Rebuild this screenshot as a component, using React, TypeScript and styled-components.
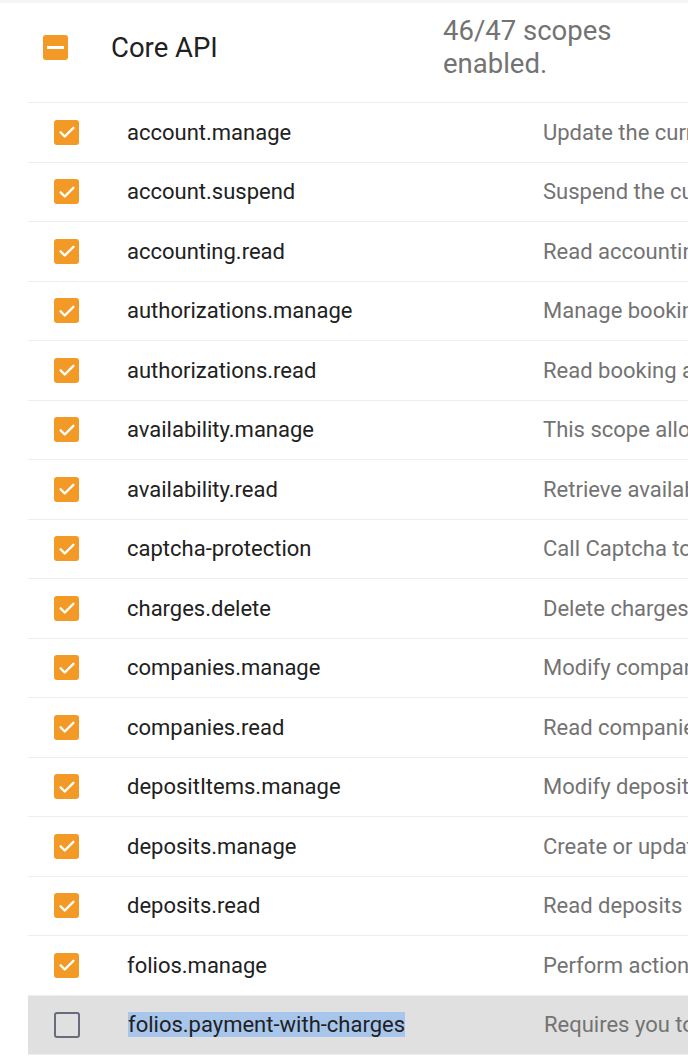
import React from "react";
import styled, { createGlobalStyle } from "styled-components";

const Global = createGlobalStyle`
  html, body { margin: 0; padding: 0; background: #ffffff; overflow: hidden; }
  body { font-family: Roboto, "Noto Sans", "Liberation Sans", sans-serif; color: #212121; }
  ::selection { background: #a8c6ec; }
`;

const Page = styled.div`
  width: 688px;
  height: 1061px;
  overflow: hidden;
  border-top: 3px solid #f5f5f5;
  box-sizing: border-box;
`;

const Header = styled.div`
  display: flex;
  align-items: center;
  height: 99px;
  box-sizing: border-box;
  padding: 0 0 11px 43px;
`;

const HeaderTitle = styled.div`
  width: 332px;
  margin-left: 43px;
  flex-shrink: 0;
  font-size: 27.5px;
  color: #212121;
`;

const HeaderCount = styled.div`
  width: 230px;
  font-size: 27.5px;
  line-height: 33px;
  color: #737373;
  flex-shrink: 0;
`;

const Table = styled.div`
  margin-left: 28px;
  width: 1100px;
`;

const Row = styled.div<{ $selected?: boolean }>`
  display: flex;
  align-items: center;
  height: 59.5px;
  box-sizing: border-box;
  border-top: 1.5px solid #eeeeee;
  padding-left: 26px;
  background: ${(p) => (p.$selected ? "#e0e0e0" : "transparent")};
`;

const Name = styled.div`
  width: 416px;
  margin-left: 48px;
  flex-shrink: 0;
  font-size: 22px;
  color: #212121;
  white-space: nowrap;
`;

const Desc = styled.div`
  font-size: 22px;
  color: #737373;
  white-space: nowrap;
`;

const Box = styled.span<{ $checked: boolean; $size: number }>`
  display: inline-flex;
  align-items: center;
  justify-content: center;
  flex-shrink: 0;
  width: ${(p) => p.$size}px;
  height: ${(p) => p.$size}px;
  box-sizing: border-box;
  border-radius: 3px;
  background: ${(p) => (p.$checked ? "#f39a26" : "transparent")};
  border: ${(p) => (p.$checked ? "none" : "2.5px solid #676c7d")};
`;

const Highlight = styled.span`
  background: #a8c6ec;
`;

function Check({ state, size = 25 }: { state: "on" | "off" | "mixed"; size?: number }) {
  return (
    <Box $checked={state !== "off"} $size={size}>
      {state === "on" && (
        <svg width="18" height="18" viewBox="0 0 24 24" fill="none">
          <path d="M3.5 12.5l5.5 5.5L20.5 6.5" stroke="#fff" strokeWidth="3.2" strokeLinecap="round" strokeLinejoin="round" />
        </svg>
      )}
      {state === "mixed" && (
        <svg width="17" height="17" viewBox="0 0 17 17">
          <rect x="0" y="7" width="17" height="3" fill="#fff" />
        </svg>
      )}
    </Box>
  );
}

const scopes: [string, string][] = [
  ["account.manage", "Update the current account settings"],
  ["account.suspend", "Suspend the current account"],
  ["accounting.read", "Read accounting data and reports"],
  ["authorizations.manage", "Manage booking authorizations"],
  ["authorizations.read", "Read booking authorizations"],
  ["availability.manage", "This scope allows managing availability"],
  ["availability.read", "Retrieve availability information"],
  ["captcha-protection", "Call Captcha to protect endpoints"],
  ["charges.delete", "Delete charges from folios"],
  ["companies.manage", "Modify companies"],
  ["companies.read", "Read companies"],
  ["depositItems.manage", "Modify deposit items"],
  ["deposits.manage", "Create or update deposits"],
  ["deposits.read", "Read deposits and deposit items"],
  ["folios.manage", "Perform actions on folios"],
];

export default function App() {
  return (
    <>
      <Global />
      <Page>
        <Header>
          <Check state="mixed" size={25} />
          <HeaderTitle>Core API</HeaderTitle>
          <HeaderCount>46/47 scopes enabled.</HeaderCount>
        </Header>
        <Table>
          {scopes.map(([n, d]) => (
            <Row key={n}>
              <Check state="on" />
              <Name>{n}</Name>
              <Desc>{d}</Desc>
            </Row>
          ))}
          <Row $selected>
            <Check state="off" size={26} />
            <Name>
              <Highlight>folios.payment-with-charges</Highlight>
            </Name>
            <Desc>Requires you to enable charges scope</Desc>
          </Row>
          <Row />
        </Table>
      </Page>
    </>
  );
}
